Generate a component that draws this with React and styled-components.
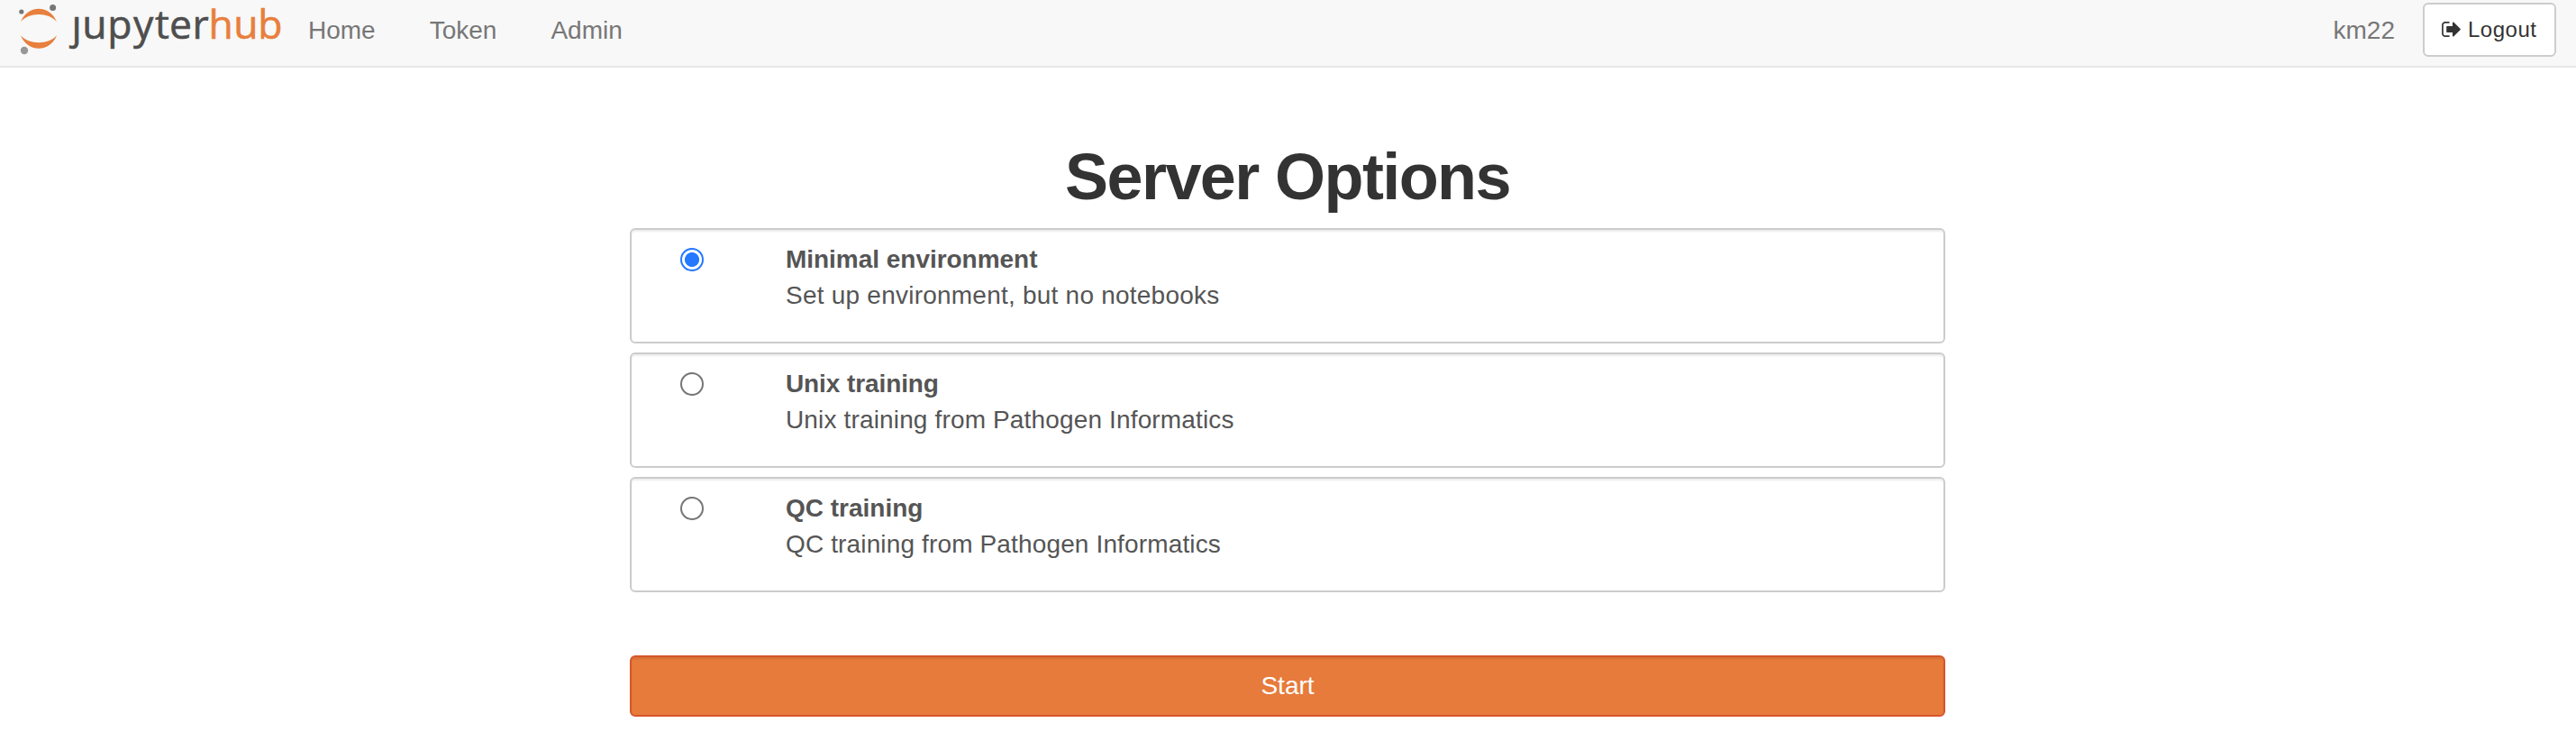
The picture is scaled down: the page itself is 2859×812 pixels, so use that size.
import React, { useState } from 'react';
import styled, { createGlobalStyle } from 'styled-components';

const GlobalStyle = createGlobalStyle`
  *, *::before, *::after { box-sizing: border-box; }
  body {
    margin: 0;
    background: #fff;
    color: #333;
    font-family: "Liberation Sans", Arial, sans-serif;
    font-size: 28px;
    line-height: 40px;
  }
`;

const Navbar = styled.nav`
  display: flex;
  height: 75px;
  padding-right: 22px;
  background: #f8f8f8;
  border-bottom: 2px solid #e7e7e7;
`;

const Brand = styled.a`
  display: block;
  width: 314px;
  height: 64px;
`;

const NavLinks = styled.div`
  display: flex;
  flex: 1;
  gap: 60px;
  padding: 14px 0 0 28px;
`;

const NavLink = styled.a`
  color: #777;
`;

const UserArea = styled.div`
  display: flex;
  align-items: flex-start;
  gap: 31px;
`;

const UserName = styled.span`
  padding-top: 14px;
  color: #777;
`;

const LogoutButton = styled.button`
  display: flex;
  align-items: center;
  gap: 8px;
  width: 148px;
  height: 60px;
  margin-top: 3px;
  padding: 0 0 1px 19px;
  border: 2px solid #ccc;
  border-radius: 6px;
  background: #fff;
  color: #333;
  font: 24px/36px "Liberation Sans", Arial, sans-serif;
  letter-spacing: 0.5px;
`;

const Main = styled.main`
  width: 1460px;
  margin: 0 auto 0 699px;
`;

const Title = styled.h1`
  margin: 0;
  padding-top: 81px;
  height: 178px;
  font-size: 72px;
  line-height: 80px;
  font-weight: 700;
  text-align: center;
  letter-spacing: -1.6px;
`;

const Options = styled.form`
  display: flex;
  flex-direction: column;
  gap: 10px;
`;

const Option = styled.label`
  display: flex;
  height: 128px;
  padding: 13px 24px 11px 54px;
  border: 2px solid #ccc;
  border-radius: 6px;
  box-shadow: inset 0 2px 2px rgba(0, 0, 0, 0.075);
  color: #555;
`;

const Radio = styled.input`
  appearance: none;
  flex: none;
  width: 26px;
  height: 26px;
  margin: 7px 91px 0 0;
  border: 2px solid #767676;
  border-radius: 50%;
  background: #fff;
  &:checked {
    border-color: #2479ff;
    background: radial-gradient(circle, #2479ff 7.6px, #fff 8.4px);
  }
`;

const OptionName = styled.div`
  font-weight: 700;
  letter-spacing: ${(p) => p.$tracking};
`;

const OptionText = styled.div`
  letter-spacing: ${(p) => p.$tracking};
`;

const StartButton = styled.button`
  width: 100%;
  height: 68px;
  margin-top: 70px;
  padding: 0;
  border: 2px solid #d8552b;
  border-radius: 6px;
  background: #e67b3c;
  box-shadow: inset 0 2px 2px rgba(0, 0, 0, 0.075);
  color: #fff;
  font: 28px/40px "Liberation Sans", Arial, sans-serif;
`;

const LogoSvg = styled.svg`
  display: block;
  overflow: visible;
`;

const LogoText = styled.text`
  font-family: "Open Sans", "Noto Sans", sans-serif;
  font-size: 44.5px;
  stroke: currentColor;
  fill: currentColor;
  stroke-width: 0.6px;
`;

const Logo = () => (
  <LogoSvg width="314" height="64" viewBox="0 0 314 64" role="img" aria-label="jupyterhub">
    <path d="M23 24.2C26.5 15.5 34 9.7 43 9.7S59.500 15.500 63 24.200C58.500 18.800 51 16 43 16S27.500 18.800 23 24.200Z" fill="#e87f3d" />
    <path d="M23 39.200C26.500 48 34 53.700 43 53.700S59.500 48 63 39.200C58.500 44.500 51 47.200 43 47.200S27.500 44.500 23 39.200Z" fill="#e87f3d" />
    <circle cx="23.800" cy="13" r="2.600" fill="#767677" />
    <circle cx="58.600" cy="8.500" r="3.500" fill="#767677" />
    <circle cx="27" cy="56" r="4.200" fill="#989798" />
    <LogoText x="79.5 91.2 119.3 148 172 188 213.4" y="43" color="#4e4e4e">ȷupyter</LogoText>
    <LogoText x="231.4 259.3 286.3" y="43" color="#e87f3d">hub</LogoText>
  </LogoSvg>
);

const SignOutIcon = () => (
  <svg width="21" height="17" viewBox="0 256 1568 1280" fill="currentColor">
    <path d="M640 1440q0 4 1 20t.5 26.500-3 23.500-10 19.500-20.500 6.500h-320q-119 0-203.500-84.500t-84.500-203.500v-704q0-119 84.500-203.500t203.500-84.500h320q13 0 22.500 9.500t9.500 22.500q0 4 1 20t.5 26.500-3 23.500-10 19.500-20.500 6.500h-320q-66 0-113 47t-47 113v704q0 66 47 113t113 47h312l11.500 1 11.500 3 8 5.500 7 9 2 13.500zm928-544q0 26-19 45l-544 544q-19 19-45 19t-45-19-19-45v-288h-448q-26 0-45-19t-19-45v-384q0-26 19-45t45-19h448v-288q0-26 19-45t45-19 45 19l544 544q19 19 19 45z" />
  </svg>
);

const profiles = [
  { name: 'Minimal environment', text: 'Set up environment, but no notebooks', nt: '-0.03px', tt: '0.23px' },
  { name: 'Unix training', text: 'Unix training from Pathogen Informatics', nt: '-0.1px', tt: '0.15px' },
  { name: 'QC training', text: 'QC training from Pathogen Informatics', nt: '0px', tt: '0.14px' },
];

export default function App() {
  const [selected, setSelected] = useState(0);
  return (
    <>
      <GlobalStyle />
      <Navbar>
        <Brand><Logo /></Brand>
        <NavLinks>
          <NavLink>Home</NavLink>
          <NavLink>Token</NavLink>
          <NavLink>Admin</NavLink>
        </NavLinks>
        <UserArea>
          <UserName>km22</UserName>
          <LogoutButton><SignOutIcon />Logout</LogoutButton>
        </UserArea>
      </Navbar>
      <Main>
        <Title>Server Options</Title>
        <Options>
          {profiles.map((p, i) => (
            <Option key={p.name}>
              <Radio type="radio" name="profile" checked={selected === i} onChange={() => setSelected(i)} />
              <div>
                <OptionName $tracking={p.nt}>{p.name}</OptionName>
                <OptionText $tracking={p.tt}>{p.text}</OptionText>
              </div>
            </Option>
          ))}
        </Options>
        <StartButton>Start</StartButton>
      </Main>
    </>
  );
}
